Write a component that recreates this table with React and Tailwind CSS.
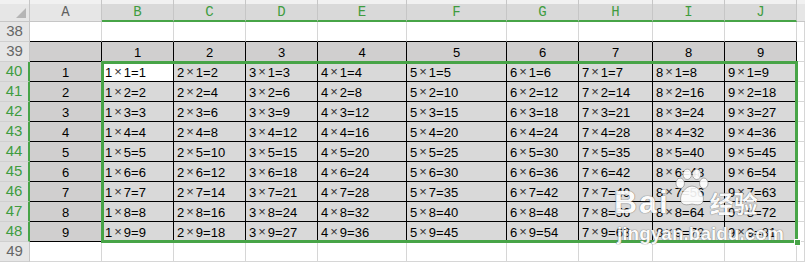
import React from "react";

const cols = ["A", "B", "C", "D", "E", "F", "G", "H", "I", "J"];
const nums = [1, 2, 3, 4, 5, 6, 7, 8, 9];
const green = "text-[#3f9c3f]";

function ColHead({ label, selected }) {
  return (
    <div
      className={
        "h-[22px] flex items-center justify-center pt-[4px] shadow-[inset_0_4px_0_#f1f1f1] text-[14px] font-['Liberation_Mono',monospace] border-r border-[#c6c6c6] " +
        (selected
          ? "bg-[#d9d9d9] border-b-2 border-b-[#47a447] " + green
          : "bg-[#e6e6e6] border-b border-b-[#c6c6c6] text-[#606060]")
      }
    >
      {label}
    </div>
  );
}

function RowHead({ n, selected }) {
  return (
    <div
      className={
        "h-[20px] flex items-center justify-center text-[15px] font-['Liberation_Sans',sans-serif] border-b border-[#cfcfcf] " +
        (selected
          ? "bg-[#dcdcdc] border-r-2 border-r-[#47a447] " + green
          : "bg-[#e6e6e6] border-r border-r-[#c6c6c6] text-[#666]")
      }
    >
      {n}
    </div>
  );
}

function Empty({ dark }) {
  return (
    <div
      className={
        "h-[20px] bg-white border-r border-r-[#d6d6d6] border-b " +
        (dark ? "border-b-black" : "border-b-[#d6d6d6]")
      }
    />
  );
}

function Cell({ children, fill, left }) {
  return (
    <div
      className={
        "h-[20px] flex items-center border-r border-b border-black text-[13px] text-black font-['Liberation_Sans',sans-serif] pt-[2px] " +
        fill +
        (left ? " pl-[3px]" : " justify-center")
      }
    >
      {children}
    </div>
  );
}

function Paw() {
  return (
    <svg width="34" height="40" viewBox="0 0 36 42">
      <g fill="#ffffff" stroke="rgba(100,100,100,0.55)" strokeWidth="1">
        <ellipse cx="5.5" cy="16" rx="4.5" ry="5.5" />
        <ellipse cx="13" cy="6.5" rx="4.5" ry="5.5" />
        <ellipse cx="23" cy="6.5" rx="4.5" ry="5.5" />
        <ellipse cx="30.5" cy="16" rx="4.5" ry="5.5" />
        <path d="M18 19 C11 19 5 28 6 34 C7 40 13 39 18 38 C23 39 29 40 30 34 C31 28 25 19 18 19 Z" />
      </g>
    </svg>
  );
}

export default function App() {
  const rows = [];
  rows.push(
    <React.Fragment key="r38">
      <RowHead n={38} />
      {cols.map((c) => (
        <Empty key={c} dark />
      ))}
      <Empty />
    </React.Fragment>
  );
  rows.push(
    <React.Fragment key="r39">
      <RowHead n={39} />
      <Cell fill="bg-[#d0cfcf]" />
      {nums.map((n) => (
        <Cell key={n} fill="bg-[#d0cfcf]">
          {n}
        </Cell>
      ))}
      <Empty />
    </React.Fragment>
  );
  for (let r = 1; r <= 9; r++) {
    rows.push(
      <React.Fragment key={"r" + r}>
        <RowHead n={39 + r} selected />
        <Cell fill="bg-[#d0cfcf]">{r}</Cell>
        {nums.map((c) => (
          <Cell key={c} left fill={c === 1 && r === 1 ? "bg-white" : "bg-[#d9d9d9]"}>
            {c}
            <span className="mx-[2px] text-[#333] relative -top-px text-[13px] font-light">×</span>
            {r}={c * r}
          </Cell>
        ))}
        <Empty />
      </React.Fragment>
    );
  }
  rows.push(
    <React.Fragment key="r49">
      <RowHead n={49} />
      {cols.map((c) => (
        <Empty key={c} />
      ))}
      <Empty />
    </React.Fragment>
  );

  const wm = "leading-none text-white [text-shadow:0_0_1px_#6b6b6b,0_0_1px_#6b6b6b]";

  return (
    <div className="relative w-[805px] h-[262px] overflow-hidden bg-white select-none">
      <div className="grid grid-cols-[30px_72px_72px_72px_72px_89px_100px_72px_74px_72px_72px_1fr]">
        <div className="h-[22px] relative bg-[#e6e6e6] shadow-[inset_0_4px_0_#f1f1f1] border-r border-b border-[#c6c6c6]">
          <div className="absolute right-[3px] bottom-[3px] w-0 h-0 border-l-[10px] border-l-transparent border-b-[10px] border-b-[#b5b5b5]" />
        </div>
        {cols.map((c) => (
          <ColHead key={c} label={c} selected={c !== "A"} />
        ))}
        <div className="h-[22px] bg-[#e6e6e6] shadow-[inset_0_4px_0_#f1f1f1] border-b border-[#c6c6c6]" />
        {rows}
      </div>

      {/* selection box + fill handle */}
      <div className="absolute left-[101px] top-[61px] w-[697px] h-[182px] border-[3px] border-[#47a447] pointer-events-none">
        <div className="absolute -right-[6px] -bottom-[6px] w-[7px] h-[7px] bg-[#47a447] border border-white" />
      </div>

      {/* baidu jingyan watermark */}
      <div className="absolute left-[614px] top-[166px] pointer-events-none opacity-90">
        <div className="flex items-start">
          <span className={wm + " mt-[20px] text-[32px] font-bold font-['Liberation_Sans',sans-serif] tracking-[2px]"}>
            Bai
          </span>
          <div className="ml-[5px] mt-[2px]">
            <Paw />
          </div>
          <span className={wm + " mt-[25px] ml-[1px] text-[24px] font-bold font-['Noto_Sans_CJK_SC',sans-serif]"}>
            经验
          </span>
        </div>
        <div className={wm + " mt-[6px] ml-[3px] text-[19px] font-semibold font-['Liberation_Sans',sans-serif]"}>
          jingyan.baidu.com
        </div>
      </div>
    </div>
  );
}
